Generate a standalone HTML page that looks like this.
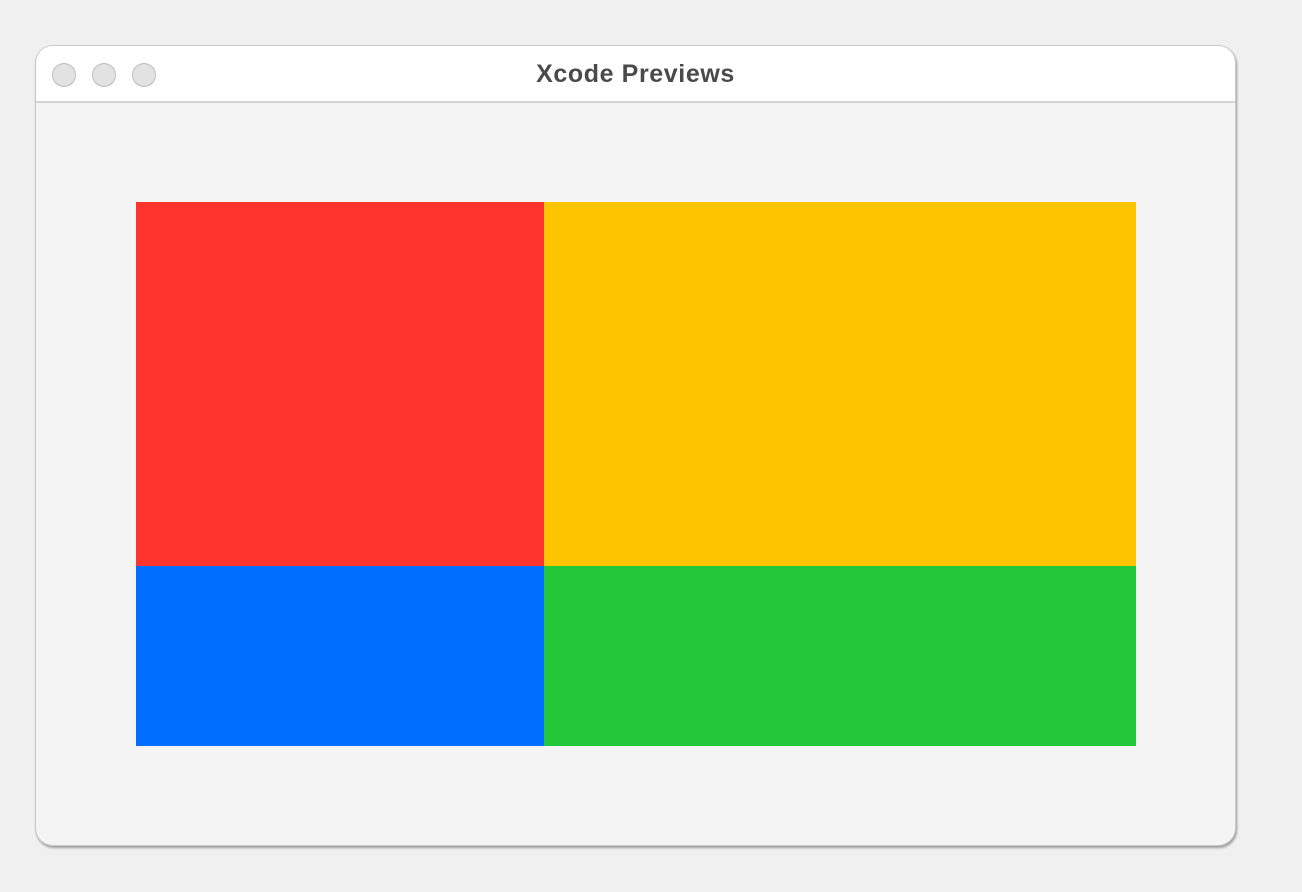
<!DOCTYPE html>
<html><head><style>
html,body{margin:0;padding:0;}
body{width:1302px;height:892px;background:#f0f0f0;position:relative;overflow:hidden;font-family:"Liberation Sans",sans-serif;}
.win{position:absolute;left:35px;top:45px;width:1199px;height:799px;border:1px solid #c8c8c8;border-radius:18px;background:#f4f4f4;overflow:hidden;box-shadow:1px 2px 2px rgba(0,0,0,0.35);}
.tb{position:absolute;left:0;top:0;width:100%;height:55px;background:#fff;border-bottom:2px solid #d4d4d4;}
.dot{position:absolute;top:17px;width:22px;height:22px;border-radius:50%;background:#e2e2e2;border:1px solid #bdbdbd;}
.title{position:absolute;left:0;right:0;top:13px;text-align:center;font-weight:bold;font-size:25px;letter-spacing:0.6px;color:#4a4a4a;line-height:30px;}
.r{position:absolute;}
</style></head><body>
<div class="win">
 <div class="tb">
  <div class="dot" style="left:16px"></div>
  <div class="dot" style="left:56px"></div>
  <div class="dot" style="left:96px"></div>
  <div class="title">Xcode Previews</div>
 </div>
 <div class="r" style="left:100px;top:156px;width:408px;height:364px;background:#ff352d"></div>
 <div class="r" style="left:508px;top:156px;width:592px;height:364px;background:#ffc400"></div>
 <div class="r" style="left:100px;top:520px;width:408px;height:180px;background:#006fff"></div>
 <div class="r" style="left:508px;top:520px;width:592px;height:180px;background:#22c73a"></div>
</div>
</body></html>
